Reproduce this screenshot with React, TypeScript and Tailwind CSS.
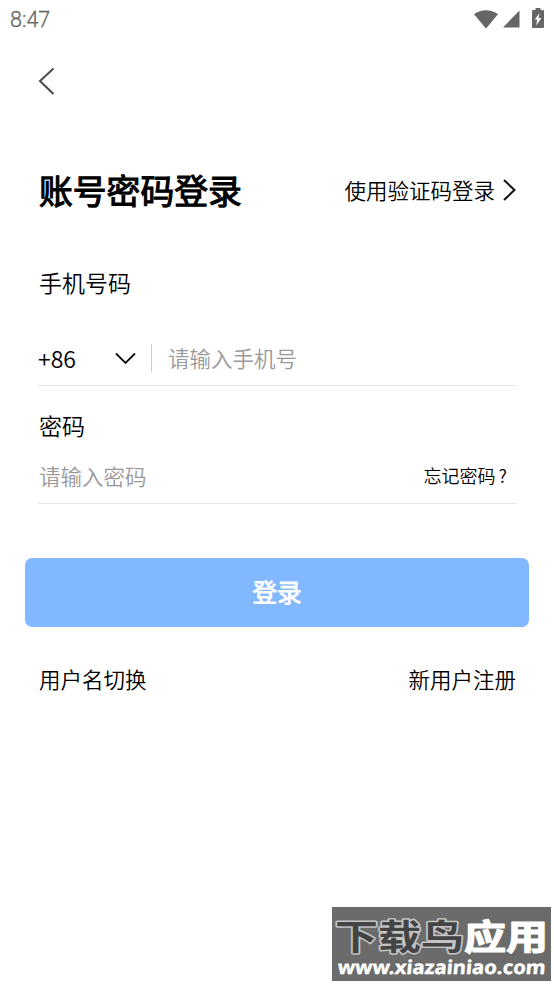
import { useState } from "react";

const FONT = "font-['Noto_Sans_CJK_SC',sans-serif]";

function StatusBar() {
  return (
    <div className="flex h-[38px] items-center justify-between px-[10px] text-[#666666]">
      <span className="pt-[2px] font-['Roboto',sans-serif] text-[21.5px] leading-[38px] [-webkit-text-stroke:0.3px_#666666]">
        8:47
      </span>
      <div className="flex items-center">
        <svg width="24" height="19" viewBox="0 0 24 19" fill="currentColor">
          <path d="M0 4.2C7 -1.2 17 -1.2 24 4.2L12 18.5Z" />
        </svg>
        <svg className="ml-[5px]" width="17" height="18" viewBox="0 0 18 18" fill="currentColor">
          <path d="M17.5 0V18H0Z" />
        </svg>
        <svg className="mb-[2px] ml-[12px]" width="12" height="20" viewBox="0 0 12 20">
          <path
            d="M3.5 0h5v2H11q1 0 1 1v16q0 1-1 1H1q-1 0-1-1V3q0-1 1-1h2.500z"
            fill="currentColor"
          />
          <path d="M7.500 5L2.800 11.500H5.200L4.200 17.500L9.400 10H6.600Z" fill="#fff" />
        </svg>
      </div>
    </div>
  );
}

function Watermark() {
  return (
    <div className="absolute left-[332px] top-[907px] h-[74px] w-[219px] bg-[#6b6b6b]">
      <svg width="219" height="74" viewBox="0 0 219 74">
        <g
          fontFamily="'Noto Sans CJK SC', sans-serif"
          fontWeight="700"
          fontSize="35"
          strokeLinejoin="round"
          paintOrder="stroke"
        >
          <text
            x="3"
            y="43"
            textLength="129"
            lengthAdjust="spacingAndGlyphs"
            fill="#444444"
            stroke="#c4c4c4"
            strokeWidth="3"
          >
            下载鸟
          </text>
          <text
            x="132"
            y="43"
            textLength="84"
            lengthAdjust="spacingAndGlyphs"
            fill="#ffffff"
            stroke="#ffffff"
            strokeWidth="1.2"
          >
            应用
          </text>
        </g>
        <text
          x="6"
          y="67"
          transform="translate(5 0) skewX(-5)"
          textLength="208"
          lengthAdjust="spacingAndGlyphs"
          fontFamily="'Noto Sans', sans-serif"
          fontWeight="700"
          fontSize="19"
          fill="#ffffff"
          stroke="#ffffff"
          strokeWidth="0.4"
        >
          www.xiazainiao.com
        </text>
      </svg>
    </div>
  );
}

export default function App() {
  const [phone, setPhone] = useState("");
  const [password, setPassword] = useState("");

  return (
    <main className={`relative h-[985px] w-[554px] overflow-hidden bg-white font-[350] text-black ${FONT}`}>
      <StatusBar />

      <header className="flex h-[86px] items-center pl-[38px]">
        <button aria-label="返回">
          <svg width="17" height="28" viewBox="0 0 17 28" fill="none" stroke="#4a4a4e" strokeWidth="2">
            <path d="M15.500 1.500L2 14L15.500 27" />
          </svg>
        </button>
      </header>

      <div className="mt-[36px] flex h-[60px] items-center justify-between pl-[39px] pr-[38px]">
        <h1 className="text-[33.8px] font-normal leading-[60px] [-webkit-text-stroke:1.1px_#000]">
          账号密码登录
        </h1>
        <button className="flex items-center text-[21.5px] leading-[60px]">
          使用验证码登录
          <svg className="ml-[8px]" width="13" height="22" viewBox="0 0 13 22" fill="none" stroke="#111" strokeWidth="2">
            <path d="M1 1L11.500 11L1 21" />
          </svg>
        </button>
      </div>

      <form className="px-[38px]">
        <label className="mt-[42px] block h-[40px] pl-px text-[23px] leading-[40px]">手机号码</label>
        <div className="mt-[31px] flex h-[53px] items-center border-b border-[#e5e5e5]">
          <span className="w-[77px] pb-[2px] font-['Noto_Sans_CJK_SC',sans-serif] text-[23px]">+86</span>
          <svg className="mb-[2px]" width="21" height="13" viewBox="0 0 21 13" fill="none" stroke="#111" strokeWidth="1.8">
            <path d="M1 1.500L10.500 11L20 1.500" />
          </svg>
          <div className="mb-[2px] ml-[15px] h-[28px] w-px bg-[#cccccc]" />
          <input
            className="mb-[4px] ml-[16px] h-[40px] w-[300px] text-[21.5px] outline-none placeholder:text-[#999999]"
            placeholder="请输入手机号"
            value={phone}
            onChange={(e) => setPhone(e.target.value)}
          />
        </div>

        <label className="mt-[19px] block h-[40px] pl-px text-[23px] leading-[40px]">密码</label>
        <div className="mt-[6px] flex h-[53px] items-center justify-between border-b border-[#e5e5e5] pr-[9px]">
          <input
            className="mb-[4px] h-[40px] w-[300px] pl-px text-[21.5px] outline-none placeholder:text-[#999999]"
            type="password"
            placeholder="请输入密码"
            value={password}
            onChange={(e) => setPassword(e.target.value)}
          />
          <button type="button" className="mb-[3px] text-[18px]">
            忘记密码<span className="ml-[3px]">?</span>
          </button>
        </div>
      </form>

      <button className="ml-[25px] mt-[54px] block h-[69px] w-[504px] rounded-[7px] bg-[#82b8ff] pb-[2px] text-[24.5px] font-normal leading-[67px] text-white [-webkit-text-stroke:0.9px_#fff]">
        登录
      </button>

      <div className="mt-[32px] flex h-[40px] items-center justify-between pl-[39px] pr-[38px] text-[21.5px]">
        <button>用户名切换</button>
        <button>新用户注册</button>
      </div>

      <Watermark />
    </main>
  );
}
